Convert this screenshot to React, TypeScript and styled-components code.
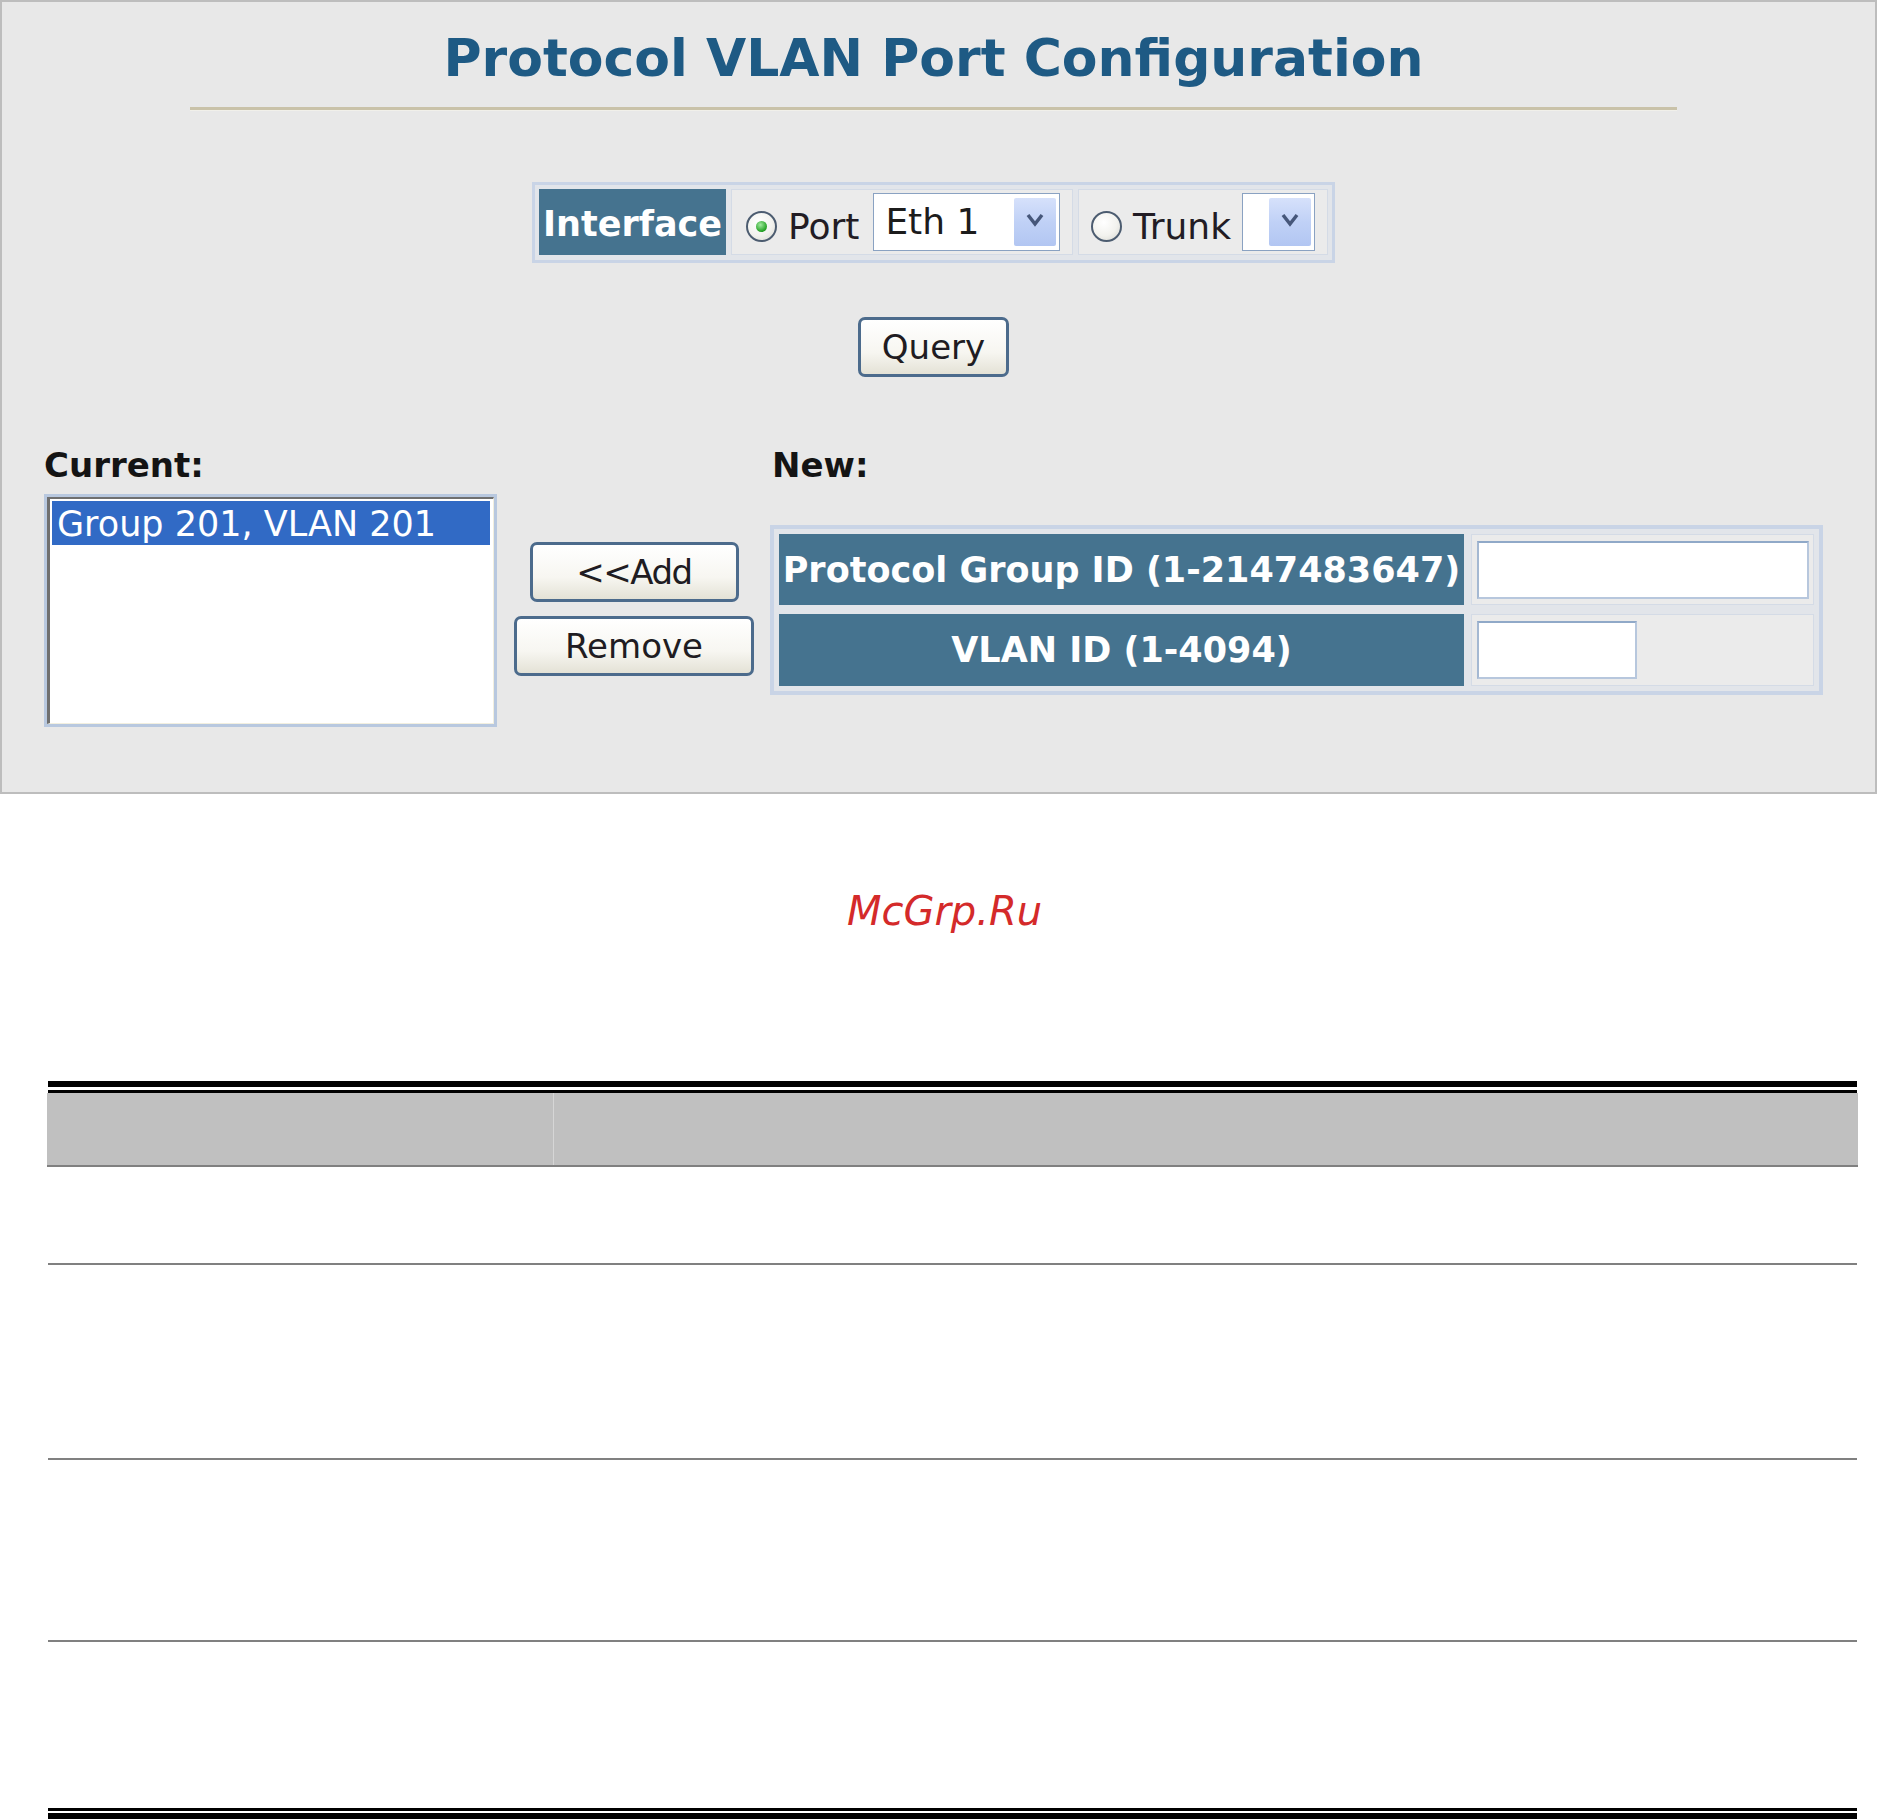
import React from 'react';
import styled, { createGlobalStyle } from 'styled-components';

const GlobalStyle = createGlobalStyle`
  html, body {
    margin: 0;
    padding: 0;
    background: #ffffff;
  }
  body {
    font-family: "DejaVu Sans", Verdana, sans-serif;
    color: #1e1e1e;
  }
`;

const Page = styled.div`
  width: 1879px;
  display: flex;
  flex-direction: column;
`;

/* ---------- screenshot panel ---------- */

const Panel = styled.section`
  box-sizing: border-box;
  width: 1877px;
  height: 794px;
  padding-right: 10px;
  background: #e8e8e8;
  border: 2px solid #bdbdbd;
  display: flex;
  flex-direction: column;
  align-items: center;
`;

const Title = styled.h1`
  margin: 27px 0 0;
  font-size: 52px;
  line-height: 58px;
  font-weight: bold;
  color: #1e5a84;
  white-space: nowrap;
`;

const TitleRule = styled.div`
  width: 1487px;
  margin-top: 20px;
  border-top: 3px solid #c9c2a9;
  border-bottom: 1px solid #f1f0ea;
`;

const InterfaceBox = styled.div`
  margin-top: 71px;
  display: flex;
  gap: 5px;
  padding: 4px 4px 5px;
  border: 3px solid #c9d4e6;
  background: #e2e5ea;
`;

const HeadCell = styled.div`
  box-sizing: border-box;
  background: #45738f;
  color: #ffffff;
  font-size: 35px;
  font-weight: bold;
  display: flex;
  align-items: center;
  justify-content: center;
  white-space: nowrap;
`;

const InterfaceHead = styled(HeadCell)`
  width: 187px;
  height: 66px;
  padding-top: 3px;
`;

const ChoiceCell = styled.div<{ $width: number; $padLeft: number }>`
  box-sizing: border-box;
  width: ${(p) => p.$width}px;
  height: 66px;
  background: #ebebeb;
  border: 1px solid #d4dbe6;
  display: flex;
  align-items: center;
  padding-left: ${(p) => p.$padLeft}px;
`;

const Radio = styled.span<{ $checked?: boolean }>`
  box-sizing: border-box;
  flex: none;
  width: 31px;
  height: 31px;
  margin-top: 8px;
  border-radius: 50%;
  border: 2px solid #4c5c70;
  background: radial-gradient(circle at 40% 35%, #ffffff 0%, #f2f2ee 55%, #d6d6cf 100%);
  display: inline-flex;
  align-items: center;
  justify-content: center;

  &::after {
    content: '';
    width: 11px;
    height: 11px;
    border-radius: 50%;
    background: ${(p) =>
      p.$checked ? 'radial-gradient(circle at 40% 35%, #a2ea9f 0%, #2aa52a 65%, #1b861b 100%)' : 'transparent'};
  }
`;

const ChoiceLabel = styled.span<{ $gapAfter: number }>`
  margin-left: 11px;
  margin-right: ${(p) => p.$gapAfter}px;
  margin-top: 8px;
  font-size: 36px;
  color: #221c24;
  white-space: nowrap;
`;

const SelectBox = styled.div<{ $width: number }>`
  box-sizing: border-box;
  width: ${(p) => p.$width}px;
  height: 58px;
  background: #ffffff;
  border: 1px solid #8aa2c2;
  display: flex;
  align-items: stretch;
`;

const SelectText = styled.span`
  flex: 1;
  padding-left: 11px;
  font-size: 36px;
  line-height: 56px;
  color: #1c1c1c;
  white-space: nowrap;
`;

const SelectArrow = styled.span`
  width: 42px;
  margin: 4px 3px 4px 0;
  border-radius: 2px;
  background: linear-gradient(180deg, #d6e1fb 0%, #c0d1f6 50%, #b2c6f2 100%);
  display: flex;
  justify-content: center;
  padding-top: 15px;
  box-sizing: border-box;
`;

const Chevron = () => (
  <svg width="18" height="14" viewBox="0 0 18 14">
    <polyline points="2,2 9,11 16,2" fill="none" stroke="#46577a" strokeWidth="3.5" />
  </svg>
);

const Button = styled.button<{ $width: number }>`
  box-sizing: border-box;
  width: ${(p) => p.$width}px;
  height: 60px;
  padding: 0;
  border: 3px solid #4c6b8c;
  border-radius: 7px;
  background: linear-gradient(180deg, #ffffff 0%, #f7f6f1 60%, #e4e2d6 100%);
  font-family: "DejaVu Sans", Verdana, sans-serif;
  font-size: 34px;
  color: #201c22;
  cursor: pointer;
`;

const AddButton = styled(Button)`
  letter-spacing: -1.5px;
`;

const QueryButton = styled(Button)`
  margin-top: 54px;
`;

const Lower = styled.div`
  align-self: stretch;
  margin-top: 68px;
  padding-left: 42px;
  display: flex;
  align-items: flex-start;
`;

const Column = styled.div`
  display: flex;
  flex-direction: column;
`;

const SectionLabel = styled.div`
  font-size: 34px;
  font-weight: bold;
  line-height: 40px;
  color: #141414;
  white-space: nowrap;
`;

const ListBox = styled.div`
  box-sizing: border-box;
  width: 453px;
  height: 233px;
  margin-top: 9px;
  border: 3px solid #b8c8df;
  display: flex;
`;

const ListInner = styled.div`
  flex: 1;
  background: #ffffff;
  border-top: 2px solid #6f6f6f;
  border-left: 3px solid #6f6f6f;
  border-right: 1px solid #f2efdf;
  border-bottom: 1px solid #f2efdf;
  padding: 2px 3px 0 2px;
`;

const ListItem = styled.div<{ $selected?: boolean }>`
  height: 44px;
  padding-left: 5px;
  font-size: 35px;
  line-height: 46px;
  white-space: nowrap;
  background: ${(p) => (p.$selected ? '#316ac5' : 'transparent')};
  color: ${(p) => (p.$selected ? '#ffffff' : '#1c1c1c')};
`;

const ButtonColumn = styled.div`
  width: 240px;
  margin-left: 17px;
  margin-top: 97px;
  display: flex;
  flex-direction: column;
  align-items: center;
  gap: 14px;
`;

const NewColumn = styled(Column)`
  margin-left: 16px;
`;

const NewLabel = styled(SectionLabel)`
  padding-left: 2px;
`;

const NewTable = styled.div`
  margin-top: 40px;
  display: grid;
  grid-template-columns: 685px 343px;
  grid-template-rows: 71px 72px;
  gap: 9px 7px;
  padding: 5px;
  border: 4px solid #c9d4e6;
  background: #e2e5ea;
`;

const ValueCell = styled.div`
  box-sizing: border-box;
  background: #ebebeb;
  border: 1px solid #d4dbe6;
  display: flex;
  align-items: center;
  padding-left: 5px;
`;

const TextInput = styled.input<{ $width: number }>`
  box-sizing: border-box;
  width: ${(p) => p.$width}px;
  height: 58px;
  margin: 0;
  background: #ffffff;
  border: 2px solid #b7c7dd;
  border-top-color: #90a9c8;
  border-left-color: #a4b8d2;
  outline: none;
`;

/* ---------- page below ---------- */

const Watermark = styled.div`
  height: 287px;
  box-sizing: border-box;
  padding: 94px 0 0 10px;
  text-align: center;
  font-size: 40px;
  line-height: 47px;
  font-style: italic;
  color: #d42a2a;
`;

const DocTable = styled.div`
  width: 1809px;
  margin-left: 48px;
  display: flex;
  flex-direction: column;
`;

const DoubleRule = styled.div<{ $thickFirst?: boolean }>`
  height: ${(p) => (p.$thickFirst ? 3 : 2)}px;
  border-top: ${(p) => (p.$thickFirst ? 6 : 3)}px solid #000000;
  border-bottom: ${(p) => (p.$thickFirst ? 3 : 6)}px solid #000000;
`;

const DocHead = styled.div`
  height: 72px;
  margin-left: -1px;
  margin-right: -1px;
  display: grid;
  grid-template-columns: 506px 1fr;
  background: #c0c0c0;
  border-bottom: 2px solid #808080;
`;

const DocHeadCell = styled.div<{ $divider?: boolean }>`
  border-left: ${(p) => (p.$divider ? '1px solid #d6d6d6' : 'none')};
`;

const DocRow = styled.div<{ $height: number; $last?: boolean }>`
  height: ${(p) => p.$height}px;
  display: grid;
  grid-template-columns: 505px 1fr;
  border-bottom: ${(p) => (p.$last ? 'none' : '2px solid #808080')};
`;

const DocCell = styled.div``;

const ROW_HEIGHTS = [96, 193, 180, 166];

export default function App() {
  return (
    <Page>
      <GlobalStyle />
      <Panel>
        <Title>Protocol VLAN Port Configuration</Title>
        <TitleRule />

        <InterfaceBox>
          <InterfaceHead>Interface</InterfaceHead>
          <ChoiceCell $width={342} $padLeft={14}>
            <Radio $checked />
            <ChoiceLabel $gapAfter={14}>Port</ChoiceLabel>
            <SelectBox $width={187}>
              <SelectText>Eth 1</SelectText>
              <SelectArrow>
                <Chevron />
              </SelectArrow>
            </SelectBox>
          </ChoiceCell>
          <ChoiceCell $width={250} $padLeft={12}>
            <Radio />
            <ChoiceLabel $gapAfter={11}>Trunk</ChoiceLabel>
            <SelectBox $width={73}>
              <SelectText />
              <SelectArrow>
                <Chevron />
              </SelectArrow>
            </SelectBox>
          </ChoiceCell>
        </InterfaceBox>

        <QueryButton $width={151}>Query</QueryButton>

        <Lower>
          <Column>
            <SectionLabel>Current:</SectionLabel>
            <ListBox>
              <ListInner>
                <ListItem $selected>Group 201, VLAN 201</ListItem>
              </ListInner>
            </ListBox>
          </Column>

          <ButtonColumn>
            <AddButton $width={209}>&lt;&lt;Add</AddButton>
            <Button $width={240}>Remove</Button>
          </ButtonColumn>

          <NewColumn>
            <NewLabel>New:</NewLabel>
            <NewTable>
              <HeadCell>Protocol Group ID (1-2147483647)</HeadCell>
              <ValueCell>
                <TextInput $width={332} readOnly defaultValue="" />
              </ValueCell>
              <HeadCell>VLAN ID (1-4094)</HeadCell>
              <ValueCell>
                <TextInput $width={160} readOnly defaultValue="" />
              </ValueCell>
            </NewTable>
          </NewColumn>
        </Lower>
      </Panel>

      <Watermark>McGrp.Ru</Watermark>

      <DocTable>
        <DoubleRule $thickFirst />
        <DocHead>
          <DocHeadCell />
          <DocHeadCell $divider />
        </DocHead>
        {ROW_HEIGHTS.map((h, i) => (
          <DocRow key={i} $height={h} $last={i === ROW_HEIGHTS.length - 1}>
            <DocCell />
            <DocCell />
          </DocRow>
        ))}
        <DoubleRule />
      </DocTable>
    </Page>
  );
}
